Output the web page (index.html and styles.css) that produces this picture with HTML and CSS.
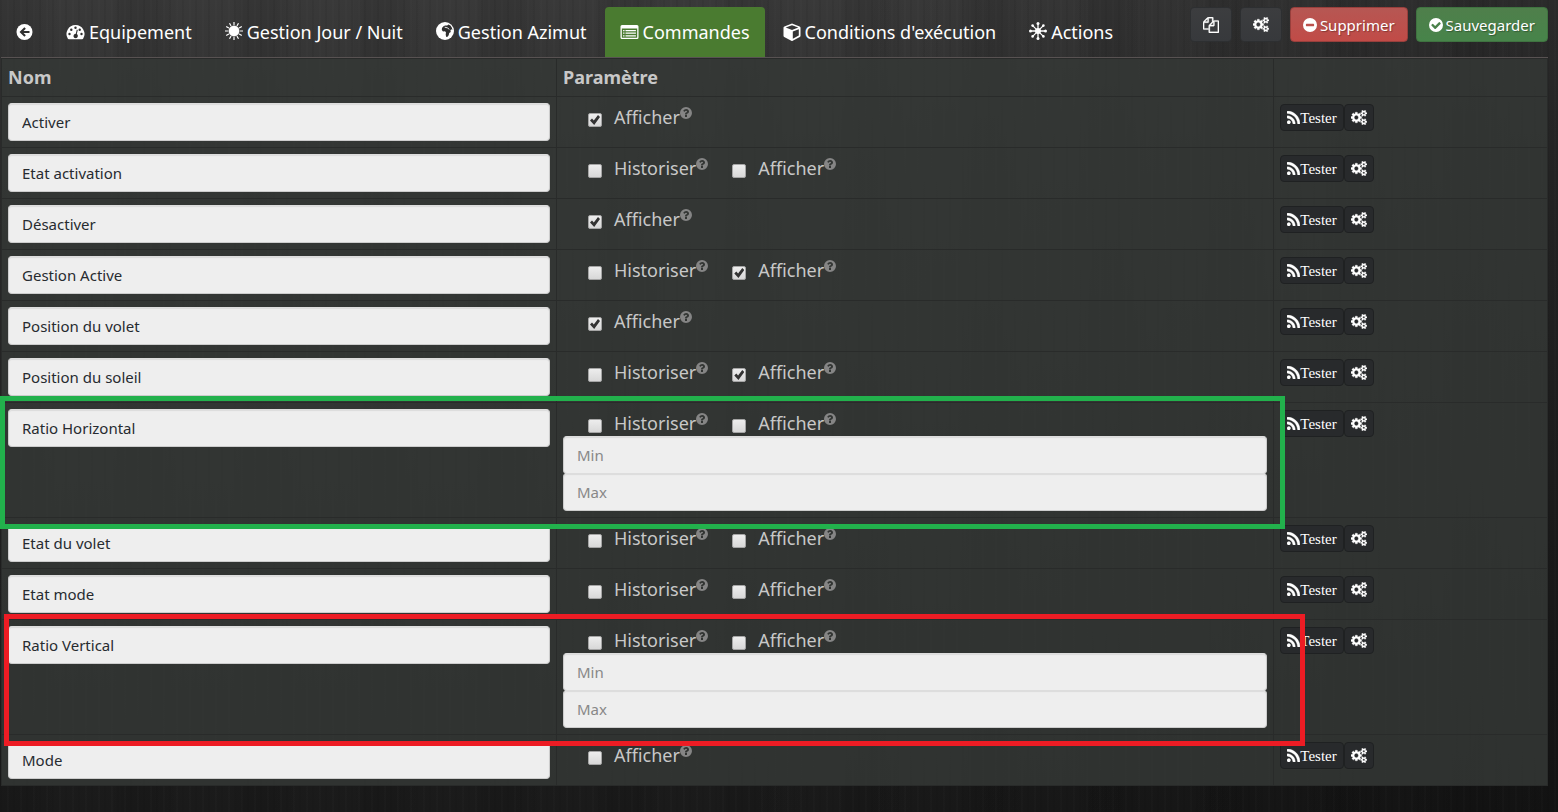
FILE: index.html
```html
<!DOCTYPE html>
<html lang="fr">
<head>
<meta charset="utf-8">
<title>Commandes</title>
<meta name="viewport" content="width=device-width, initial-scale=1">
<link rel="stylesheet" href="styles.css">
</head>
<body>
<svg class="sprite" aria-hidden="true">
  <symbol id="i-back" viewBox="0 0 16 16"><circle cx="8" cy="8" r="8" fill="currentColor"/><path d="M8.6 3.9 4.5 8l4.1 4.1M5 8h8" fill="none" stroke="#303030" stroke-width="2.1"/></symbol>
  <symbol id="i-gauge" viewBox="0 0 18 16"><path fill="currentColor" d="M9 1a9 9 0 0 0-7.6 13.8c.2.3.5.5.9.5h13.4c.4 0 .7-.2.9-.5A9 9 0 0 0 9 1z"/><g fill="#303030"><circle cx="3" cy="10" r="1.2"/><circle cx="4.8" cy="5.8" r="1.2"/><circle cx="9" cy="3.7" r="1.2"/><circle cx="13.2" cy="5.8" r="1.2"/><circle cx="15" cy="10" r="1.2"/><path d="m10.3 5.600-1 4.200a2.200 2.200 0 1 0 1 .3l1-4.200z"/></g></symbol>
  <symbol id="i-sun" viewBox="0 0 18 18"><path stroke="currentColor" stroke-width="1.200" d="M9 0v18M0 9h18M4.500 1.200l9 15.600M1.200 4.500l15.600 9M1.200 13.500l15.600-9M4.500 16.800l9-15.600"/><circle cx="9" cy="9" r="5.700" fill="currentColor" stroke="#303030" stroke-width=".6"/></symbol>
  <symbol id="i-globe" viewBox="0 0 18 18"><circle cx="9" cy="9" r="9" fill="currentColor"/><path fill="#303030" d="M7.200 4.600 9 3.400l2.200.2 1.200-1.200 2 1.200 1.500 2.200.5 2.200-1.200-.8-.8 1.200.4 1.500-1.600 1.200-.5 2.200-1.500 1.800-1.100-.4-.4-2.300.3-1.800-1-1.300-2 .1-1.200-1.400.2-1.900z"/><path stroke="currentColor" stroke-width=".9" d="m8.700 5.200 2.600.6 2 1.500" fill="none"/></symbol>
  <symbol id="i-list" viewBox="0 0 18 16"><path fill="currentColor" fill-rule="evenodd" d="M1.500 1h15A1.500 1.500 0 0 1 18 2.500v11a1.500 1.500 0 0 1-1.500 1.500h-15A1.500 1.500 0 0 1 0 13.500v-11A1.500 1.500 0 0 1 1.500 1zM1.300 4.600v8.600q0 .5.500.5h14.400q.5 0 .5-.5V4.600z"/><path stroke="currentColor" stroke-width="1.300" d="M2.600 6.600H4M5 6.600h10.400M2.600 9.200H4M5 9.200h10.400M2.600 11.800H4M5 11.800h10.400"/></symbol>
  <symbol id="i-cube" viewBox="0 0 18 18"><path fill="currentColor" fill-rule="evenodd" d="m9 .6 7.600 2.800q.9.300.9 1.300v8.100q0 .8-.7 1.200L9.700 17.700q-.7.400-1.400 0L1.200 14q-.7-.4-.7-1.200V4.700q0-1 .9-1.300zm0 1.700L2.700 4.600 9 6.900l6.300-2.300zm.8 13.400 6-3.200V6.200l-6 2.200z"/></symbol>
  <symbol id="i-star" viewBox="0 0 18 18"><circle cx="9" cy="9" r="3" fill="currentColor"/><path stroke="currentColor" stroke-width="1.300" d="M9 1v16M1 9h16M3.400 3.400l11.200 11.200M3.400 14.600 14.600 3.400"/><g fill="currentColor"><circle cx="9" cy="1.500" r="1.500"/><circle cx="9" cy="16.500" r="1.500"/><circle cx="1.500" cy="9" r="1.500"/><circle cx="16.500" cy="9" r="1.500"/><circle cx="3.600" cy="3.600" r="1.300"/><circle cx="14.400" cy="3.600" r="1.300"/><circle cx="3.600" cy="14.400" r="1.300"/><circle cx="14.400" cy="14.400" r="1.300"/></g></symbol>
  <symbol id="i-copy" viewBox="0 0 1792 1792"><path fill="currentColor" stroke="currentColor" stroke-width="40" d="M1696 384q40 0 68 28t28 68v1216q0 40-28 68t-68 28h-960q-40 0-68-28t-28-68v-288h-544q-40 0-68-28t-28-68v-672q0-40 20-88t48-76l408-408q28-28 76-48t88-20h416q40 0 68 28t28 68v328q68-40 128-40h416zm-544 213l-299 299h299v-299zm-640-384l-299 299h299v-299zm196 647l316-316v-416h-384v416q0 40-28 68t-68 28h-416v640h512v-256q0-40 20-88t48-76zm956 804v-1152h-384v416q0 40-28 68t-68 28h-416v640h896z"/></symbol>
  <symbol id="i-cogs" viewBox="0 0 1920 1792"><path fill="currentColor" stroke="currentColor" stroke-width="40" d="M896 896q0-106-75-181t-181-75-181 75-75 181 75 181 181 75 181-75 75-181zm768 512q0-52-38-90t-90-38-90 38-38 90q0 53 37.500 90.500t90.500 37.500 90.500-37.500 37.500-90.500zm0-1024q0-52-38-90t-90-38-90 38-38 90q0 53 37.500 90.500t90.500 37.500 90.500-37.500 37.500-90.500zm-384 421v185q0 10-7 19.500t-16 10.500l-155 24q-11 35-32 76 34 48 90 115 7 11 7 20 0 12-7 19-23 30-82.500 89.500t-78.500 59.500q-11 0-21-7l-115-90q-37 19-77 31-11 108-23 155-7 24-30 24h-186q-11 0-20-7.500t-10-17.500l-23-153q-34-10-75-31l-118 89q-7 7-20 7-11 0-21-8-144-133-144-160 0-9 7-19 10-14 41-53t47-61q-23-44-35-82l-152-24q-10-1-17-9.500t-7-19.500v-185q0-10 7-19.500t16-10.500l155-24q11-35 32-76-34-48-90-115-7-11-7-20 0-12 7-20 22-30 82-89t79-59q11 0 21 7l115 90q34-18 77-32 11-108 23-154 7-24 30-24h186q11 0 20 7.500t10 17.500l23 153q34 10 75 31l118-89q8-7 20-7 11 0 21 8 144 133 144 160 0 8-7 19-12 16-42 54t-45 60q23 48 34 82l152 23q10 2 17 10.500t7 19.500zm640 533v140q0 16-149 31-12 27-30 52 51 113 51 138 0 4-4 7-122 71-124 71-8 0-46-47t-52-68q-20 2-30 2t-30-2q-14 21-52 68t-46 47q-2 0-124-71-4-3-4-7 0-25 51-138-18-25-30-52-149-15-149-31v-140q0-16 149-31 13-29 30-52-51-113-51-138 0-4 4-7 4-2 35-20t59-34 30-16q8 0 46 46.500t52 67.500q20-2 30-2t30 2q51-71 92-112l6-2q4 0 124 70 4 3 4 7 0 25-51 138 17 23 30 52 149 15 149 31zm0-1024v140q0 16-149 31-12 27-30 52 51 113 51 138 0 4-4 7-122 71-124 71-8 0-46-47t-52-68q-20 2-30 2t-30-2q-14 21-52 68t-46 47q-2 0-124-71-4-3-4-7 0-25 51-138-18-25-30-52-149-15-149-31v-140q0-16 149-31 13-29 30-52-51-113-51-138 0-4 4-7 4-2 35-20t59-34 30-16q8 0 46 46.500t52 67.500q20-2 30-2t30 2q51-71 92-112l6-2q4 0 124 70 4 3 4 7 0 25-51 138 17 23 30 52 149 15 149 31z"/></symbol>
  <symbol id="i-minus" viewBox="128 128 1536 1536"><path fill="currentColor" fill-rule="evenodd" d="M1344 960v-128q0-26-19-45t-45-19h-768q-26 0-45 19t-19 45v128q0 26 19 45t45 19h768q26 0 45-19t19-45zm320-64a768 768 0 1 1-1536 0 768 768 0 1 1 1536 0z"/></symbol>
  <symbol id="i-check" viewBox="128 128 1536 1536"><path fill="currentColor" fill-rule="evenodd" d="M1412 734q0-28-18-46l-91-90q-19-19-45-19t-45 19l-408 407-226-226q-19-19-45-19t-45 19l-91 90q-18 18-18 46 0 27 18 45l362 362q19 19 45 19 27 0 46-19l543-543q18-18 18-45zm252 162a768 768 0 1 1-1536 0 768 768 0 1 1 1536 0z"/></symbol>
  <symbol id="i-help" viewBox="128 128 1536 1536"><path fill="currentColor" fill-rule="evenodd" d="M1024 1376v-192q0-14-9-23t-23-9h-192q-14 0-23 9t-9 23v192q0 14 9 23t23 9h192q14 0 23-9t9-23zm256-672q0-88-55.500-163t-138.500-116-170-41q-243 0-371 213-15 24 8 42l132 100q7 6 19 6 16 0 25-12 53-68 86-92 34-24 86-24 48 0 85.500 26t37.500 59q0 38-20 61t-68 45q-63 28-115.500 86.500t-52.500 125.500v36q0 14 9 23t23 9h192q14 0 23-9t9-23q0-19 21.500-49.500t54.500-49.500q32-18 49-28.500t46-35 44.500-48 28-60.500 12.500-81zm384 192a768 768 0 1 1-1536 0 768 768 0 1 1 1536 0z"/></symbol>
  <symbol id="i-rss" viewBox="0 128 1408 1408"><path fill="currentColor" stroke="currentColor" stroke-width="40" d="M384 1344q0 80-56 136t-136 56-136-56-56-136 56-136 136-56 136 56 56 136zm512 123q2 28-17 48-18 21-47 21h-135q-25 0-43-16.500t-20-41.500q-22-229-184.500-391.500t-391.500-184.500q-25-2-41.500-20t-16.500-43v-135q0-29 21-47 17-17 43-17h5q160 13 306 80.500t259 181.500q114 113 181.500 259t80.500 306zm512 2q2 27-18 47-18 20-46 20h-143q-26 0-44.500-17.500t-19.500-42.500q-12-215-101-408.500t-231.500-336-336-231.500-408.500-102q-25-1-42.500-19.500t-17.500-43.500v-143q0-28 20-46 18-18 44-18h3q262 13 501.500 120t425.500 294q187 186 294 425.500t120 501.500z"/></symbol>
</svg>

<div class="page">
  <header class="topbar">
    <nav class="tabs">
      <a class="tab" href="#retour" aria-label="Retour"><svg class="icon-back"><use href="#i-back"/></svg></a>
      <a class="tab" href="#equipement"><svg class="icon-wide"><use href="#i-gauge"/></svg>Equipement</a>
      <a class="tab" href="#jour-nuit"><svg class="icon-raised"><use href="#i-sun"/></svg>Gestion Jour / Nuit</a>
      <a class="tab" href="#azimut"><svg class="icon-raised"><use href="#i-globe"/></svg>Gestion Azimut</a>
      <a class="tab tab-active" href="#commandes" aria-current="page"><svg class="icon-wide"><use href="#i-list"/></svg>Commandes</a>
      <a class="tab" href="#conditions"><svg class="icon-cube"><use href="#i-cube"/></svg>Conditions d'exécution</a>
      <a class="tab" href="#actions"><svg class="icon-raised"><use href="#i-star"/></svg>Actions</a>
    </nav>
    <div class="actions">
      <button class="btn" type="button" aria-label="Dupliquer"><svg class="icon-btn"><use href="#i-copy"/></svg></button>
      <button class="btn" type="button" aria-label="Configuration avancée"><svg class="icon-cogs"><use href="#i-cogs"/></svg></button>
      <button class="btn btn-danger" type="button"><svg class="icon-round"><use href="#i-minus"/></svg>Supprimer</button>
      <button class="btn btn-success" type="button"><svg class="icon-round"><use href="#i-check"/></svg>Sauvegarder</button>
    </div>
  </header>

  <table class="commands">
    <colgroup><col class="col-name"><col class="col-param"><col></colgroup>
    <thead><tr><th scope="col">Nom</th><th scope="col">Paramètre</th><td></td></tr></thead>
    <tbody>
      <tr>
        <td><input class="field" type="text" aria-label="Nom" value="Activer"></td>
        <td><div class="options"><label class="option"><input class="check" type="checkbox" checked>Afficher<svg class="help"><use href="#i-help"/></svg></label></div></td>
        <td><div class="row-actions"><button class="mini" type="button"><svg class="icon-rss"><use href="#i-rss"/></svg>Tester</button><button class="mini" type="button" aria-label="Configurer"><svg class="icon-cogs"><use href="#i-cogs"/></svg></button></div></td>
      </tr>
      <tr>
        <td><input class="field" type="text" aria-label="Nom" value="Etat activation"></td>
        <td><div class="options"><label class="option"><input class="check" type="checkbox">Historiser<svg class="help"><use href="#i-help"/></svg></label><label class="option"><input class="check" type="checkbox">Afficher<svg class="help"><use href="#i-help"/></svg></label></div></td>
        <td><div class="row-actions"><button class="mini" type="button"><svg class="icon-rss"><use href="#i-rss"/></svg>Tester</button><button class="mini" type="button" aria-label="Configurer"><svg class="icon-cogs"><use href="#i-cogs"/></svg></button></div></td>
      </tr>
      <tr>
        <td><input class="field" type="text" aria-label="Nom" value="Désactiver"></td>
        <td><div class="options"><label class="option"><input class="check" type="checkbox" checked>Afficher<svg class="help"><use href="#i-help"/></svg></label></div></td>
        <td><div class="row-actions"><button class="mini" type="button"><svg class="icon-rss"><use href="#i-rss"/></svg>Tester</button><button class="mini" type="button" aria-label="Configurer"><svg class="icon-cogs"><use href="#i-cogs"/></svg></button></div></td>
      </tr>
      <tr>
        <td><input class="field" type="text" aria-label="Nom" value="Gestion Active"></td>
        <td><div class="options"><label class="option"><input class="check" type="checkbox">Historiser<svg class="help"><use href="#i-help"/></svg></label><label class="option"><input class="check" type="checkbox" checked>Afficher<svg class="help"><use href="#i-help"/></svg></label></div></td>
        <td><div class="row-actions"><button class="mini" type="button"><svg class="icon-rss"><use href="#i-rss"/></svg>Tester</button><button class="mini" type="button" aria-label="Configurer"><svg class="icon-cogs"><use href="#i-cogs"/></svg></button></div></td>
      </tr>
      <tr>
        <td><input class="field" type="text" aria-label="Nom" value="Position du volet"></td>
        <td><div class="options"><label class="option"><input class="check" type="checkbox" checked>Afficher<svg class="help"><use href="#i-help"/></svg></label></div></td>
        <td><div class="row-actions"><button class="mini" type="button"><svg class="icon-rss"><use href="#i-rss"/></svg>Tester</button><button class="mini" type="button" aria-label="Configurer"><svg class="icon-cogs"><use href="#i-cogs"/></svg></button></div></td>
      </tr>
      <tr>
        <td><input class="field" type="text" aria-label="Nom" value="Position du soleil"></td>
        <td><div class="options"><label class="option"><input class="check" type="checkbox">Historiser<svg class="help"><use href="#i-help"/></svg></label><label class="option"><input class="check" type="checkbox" checked>Afficher<svg class="help"><use href="#i-help"/></svg></label></div></td>
        <td><div class="row-actions"><button class="mini" type="button"><svg class="icon-rss"><use href="#i-rss"/></svg>Tester</button><button class="mini" type="button" aria-label="Configurer"><svg class="icon-cogs"><use href="#i-cogs"/></svg></button></div></td>
      </tr>
      <tr>
        <td><input class="field" type="text" aria-label="Nom" value="Ratio Horizontal"></td>
        <td><div class="options"><label class="option"><input class="check" type="checkbox">Historiser<svg class="help"><use href="#i-help"/></svg></label><label class="option"><input class="check" type="checkbox">Afficher<svg class="help"><use href="#i-help"/></svg></label></div><input class="field" type="text" aria-label="Min" placeholder="Min"><input class="field" type="text" aria-label="Max" placeholder="Max"></td>
        <td><div class="row-actions"><button class="mini" type="button"><svg class="icon-rss"><use href="#i-rss"/></svg>Tester</button><button class="mini" type="button" aria-label="Configurer"><svg class="icon-cogs"><use href="#i-cogs"/></svg></button></div></td>
      </tr>
      <tr>
        <td><input class="field" type="text" aria-label="Nom" value="Etat du volet"></td>
        <td><div class="options"><label class="option"><input class="check" type="checkbox">Historiser<svg class="help"><use href="#i-help"/></svg></label><label class="option"><input class="check" type="checkbox">Afficher<svg class="help"><use href="#i-help"/></svg></label></div></td>
        <td><div class="row-actions"><button class="mini" type="button"><svg class="icon-rss"><use href="#i-rss"/></svg>Tester</button><button class="mini" type="button" aria-label="Configurer"><svg class="icon-cogs"><use href="#i-cogs"/></svg></button></div></td>
      </tr>
      <tr>
        <td><input class="field" type="text" aria-label="Nom" value="Etat mode"></td>
        <td><div class="options"><label class="option"><input class="check" type="checkbox">Historiser<svg class="help"><use href="#i-help"/></svg></label><label class="option"><input class="check" type="checkbox">Afficher<svg class="help"><use href="#i-help"/></svg></label></div></td>
        <td><div class="row-actions"><button class="mini" type="button"><svg class="icon-rss"><use href="#i-rss"/></svg>Tester</button><button class="mini" type="button" aria-label="Configurer"><svg class="icon-cogs"><use href="#i-cogs"/></svg></button></div></td>
      </tr>
      <tr>
        <td><input class="field" type="text" aria-label="Nom" value="Ratio Vertical"></td>
        <td><div class="options"><label class="option"><input class="check" type="checkbox">Historiser<svg class="help"><use href="#i-help"/></svg></label><label class="option"><input class="check" type="checkbox">Afficher<svg class="help"><use href="#i-help"/></svg></label></div><input class="field" type="text" aria-label="Min" placeholder="Min"><input class="field" type="text" aria-label="Max" placeholder="Max"></td>
        <td><div class="row-actions"><button class="mini" type="button"><svg class="icon-rss"><use href="#i-rss"/></svg>Tester</button><button class="mini" type="button" aria-label="Configurer"><svg class="icon-cogs"><use href="#i-cogs"/></svg></button></div></td>
      </tr>
      <tr>
        <td><input class="field" type="text" aria-label="Nom" value="Mode"></td>
        <td><div class="options"><label class="option"><input class="check" type="checkbox">Afficher<svg class="help"><use href="#i-help"/></svg></label></div></td>
        <td><div class="row-actions"><button class="mini" type="button"><svg class="icon-rss"><use href="#i-rss"/></svg>Tester</button><button class="mini" type="button" aria-label="Configurer"><svg class="icon-cogs"><use href="#i-cogs"/></svg></button></div></td>
      </tr>
    </tbody>
  </table>

  <div class="mark mark-green"></div>
  <div class="mark mark-red"></div>
</div>
</body>
</html>
```
FILE: styles.css
```css
* { box-sizing: border-box; }

body {
  margin: 0;
  min-height: 100vh;
  color: #c8c8c8;
  font-family: "Noto Sans", "Open Sans", sans-serif;
  font-size: 18px;
  line-height: 26px;
  background:
    repeating-linear-gradient(90deg, rgba(0,0,0,.05) 0 2px, transparent 2px 7px, rgba(255,255,255,.01) 7px 9px, transparent 9px 13px),
    repeating-linear-gradient(90deg, rgba(0,0,0,.08) 0 30px, transparent 60px 110px, rgba(0,0,0,.06) 121px),
    linear-gradient(100deg, transparent 50%, rgba(0,0,0,.3)),
    linear-gradient(#393939, #303030 18%, #1a1a1a);
}

.sprite { position: absolute; width: 0; height: 0; }
.page { position: relative; padding: 7px 10px 26px 1px; }

.topbar {
  display: flex;
  justify-content: space-between;
  align-items: flex-start;
  border-bottom: 1px solid #585252;
}
.tabs { display: flex; gap: 3px; }
.tab {
  display: flex;
  align-items: center;
  gap: 4px;
  height: 50px;
  padding: 0 15px;
  color: #fff;
  text-decoration: none;
  white-space: nowrap;
  border-radius: 4px 4px 0 0;
}
.tab-active { background: #4a7b30; }
.icon-back { width: 17px; height: 16px; }
.icon-wide { width: 19px; height: 16px; }
.icon-raised { width: 18px; height: 18px; margin-bottom: 3px; }
.icon-cube { width: 18px; height: 18px; }

.actions { display: flex; gap: 8px; }
.btn {
  display: flex;
  align-items: center;
  gap: 3px;
  height: 35px;
  padding: 0 12px;
  font: 15px/24px "Noto Sans", "Open Sans", sans-serif;
  color: #fff;
  text-shadow: 1px 1px 1px rgba(0,0,0,.3);
  background: linear-gradient(#3c3d3f, #37393c);
  border: 1px solid #2d2f31;
  border-radius: 4px;
}
.btn-danger { background: linear-gradient(#b65753, #c14b47); border-color: #983f3c; }
.btn-success { background: linear-gradient(#4f7f4b, #47844a); border-color: #3f7340; }
.icon-btn { width: 16px; height: 16px; }
.icon-cogs { width: 16px; height: 15px; }
.icon-round { width: 14px; height: 14px; }

.commands {
  width: 100%;
  table-layout: fixed;
  border-collapse: collapse;
  background: rgba(53,56,54,.84);
}
.col-name { width: 35.9%; }
.col-param { width: 46.4%; }
.commands th, .commands td {
  padding: 6px;
  vertical-align: top;
  text-align: left;
  border: 1px solid #292b2a;
}
.commands th { font-weight: 700; line-height: 25px; }

.field {
  display: block;
  width: 100%;
  height: 38px;
  padding: 0 13px;
  color: #272b30;
  font: 15px/22px "Noto Sans", "Open Sans", sans-serif;
  background: #eee;
  border: 1px solid #ccc;
  border-top-color: #ddd;
  border-radius: 4px;
  box-shadow: inset 0 1px 1px rgba(0,0,0,.08);
}
.field + .field { margin-top: -1px; }
.field::placeholder { color: #888; opacity: 1; }

.options { display: flex; gap: 24px; height: 27px; padding: 1px 0 0 25px; }
.option { display: flex; }
.check {
  appearance: none;
  position: relative;
  width: 14px;
  height: 14px;
  margin: 9px 12px 0 0;
  background: linear-gradient(#ededed, #d8d8d8);
  border: 1px solid #a5a5a5;
  border-radius: 2px;
}
.check:checked::after {
  content: "";
  position: absolute;
  inset: 1px;
  background: #333;
  clip-path: polygon(0 56%, 20% 34%, 38% 56%, 80% 0, 100% 20%, 42% 100%);
}
.help { width: 12px; height: 12px; margin-top: 3px; color: #858585; }

.row-actions { display: flex; padding-top: 1px; }
.mini {
  display: flex;
  align-items: center;
  height: 27px;
  padding: 0 6px;
  color: #fff;
  font: 15px/20px "Liberation Serif", serif;
  background: #282a2c;
  border: 1px solid #1f2122;
  border-radius: 4px;
}
.icon-rss { width: 13px; height: 13px; }

/* Highlight frames lying over the table */
.mark { position: absolute; pointer-events: none; }
.mark-green { top: 396px; left: 0; width: 82.5%; height: 133px; border: 5px solid #22b14c; }
.mark-red { top: 614px; left: 4px; width: 83.5%; height: 132px; border: 5px solid #ed1c24; }
```
